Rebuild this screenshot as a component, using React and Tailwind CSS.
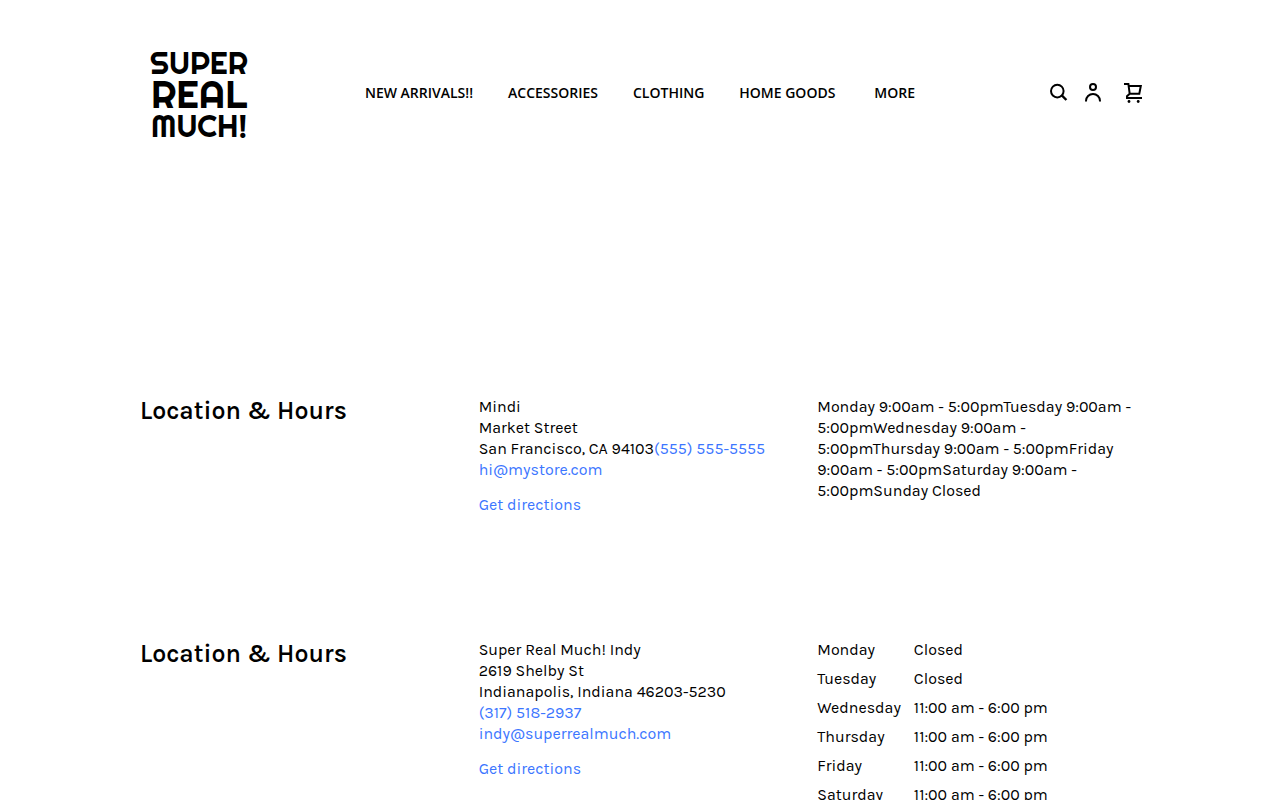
const navItems = ["New Arrivals!!", "Accessories", "Clothing", "Home Goods"];

const hours = [
  ["Monday", "Closed"],
  ["Tuesday", "Closed"],
  ["Wednesday", "11:00 am - 6:00 pm"],
  ["Thursday", "11:00 am - 6:00 pm"],
  ["Friday", "11:00 am - 6:00 pm"],
  ["Saturday", "11:00 am - 6:00 pm"],
  ["Sunday", "11:00 am - 6:00 pm"],
];

function Logo() {
  return (
    <a
      href="#home"
      className="flex w-[124px] flex-col items-center font-['Righteous','Inter',sans-serif] font-normal"
    >
      <span className="text-[31px] leading-[28px]">SUPER</span>
      <span className="text-[39px] leading-[35px]">REAL</span>
      <span className="text-[31px] leading-[28px]">MUCH!</span>
    </a>
  );
}

function HeaderIcons() {
  return (
    <div className="flex items-center justify-end pb-1">
      <button type="button" aria-label="Search" className="mr-[14px]">
        <svg className="block h-5 w-5" viewBox="0 0 20 20" fill="none" stroke="currentColor" strokeWidth="2">
          <circle cx="8.3" cy="8.1" r="6.3" />
          <path d="M12.8 12.4 17.4 17" strokeWidth="2.4" />
        </svg>
      </button>
      <a href="#account" aria-label="Account" className="mr-5">
        <svg className="block h-5 w-5" viewBox="0 0 20 20" fill="none" stroke="currentColor" strokeWidth="2">
          <circle cx="10" cy="4" r="3" />
          <path d="M3 18.6v-.6a7 7 0 0 1 14 0v.6" />
        </svg>
      </a>
      <a href="#cart" aria-label="Cart">
        <svg className="block h-5 w-5" viewBox="0 0 20 20" fill="none" stroke="currentColor" strokeWidth="2">
          <path d="M1 1h4.4l1.3 9.8h9.6L17.8 3H5.6M6.7 10.8 4 13.2V15h15" />
          <circle cx="6" cy="18.5" r="1.4" fill="currentColor" stroke="none" />
          <circle cx="15.2" cy="18.5" r="1.4" fill="currentColor" stroke="none" />
        </svg>
      </a>
    </div>
  );
}

function Location({ children, directions }) {
  return (
    <div>
      <address className="not-italic">{children}</address>
      <a href={directions} className="mt-[14px] inline-block text-[#3c76ff]">
        Get directions
      </a>
    </div>
  );
}

export default function App() {
  return (
    <div className="bg-white font-['Karla','Inter',sans-serif] text-base leading-[21px] text-black">
      <header className="mx-auto grid max-w-[1006px] grid-cols-[1fr_auto_1fr] items-center pt-[49px]">
        <Logo />
        <nav aria-label="Main" className="pb-1 font-['Open_Sans',sans-serif] text-sm font-semibold uppercase">
          <ul className="flex items-center gap-[35px]">
            {navItems.map((item) => (
              <li key={item}>
                <a href="#shop" className="whitespace-nowrap">{item}</a>
              </li>
            ))}
            <li>
              <button type="button" className="pl-1 uppercase">More</button>
            </li>
          </ul>
        </nav>
        <HeaderIcons />
      </header>

      <main className="mx-auto max-w-[1000px] pt-[256px]">
        <section className="grid grid-cols-3 gap-4">
          <h2 className="text-[25px] leading-[30px] font-semibold">Location &amp; Hours</h2>
          <Location directions="#sf">
            Mindi<br />
            Market Street<br />
            San Francisco, CA 94103
            <a href="tel:5555555555" className="text-[#3c76ff]">(555) 555-5555</a><br />
            <a href="mailto:hi@mystore.com" className="text-[#3c76ff]">hi@mystore.com</a>
          </Location>
          <p>
            Monday 9:00am - 5:00pmTuesday 9:00am - 5:00pmWednesday 9:00am -
            5:00pmThursday 9:00am - 5:00pmFriday 9:00am - 5:00pmSaturday 9:00am
            - 5:00pmSunday Closed
          </p>
        </section>

        <section className="mt-[124px] grid grid-cols-3 gap-4 pb-24">
          <h2 className="text-[25px] leading-[30px] font-semibold">Location &amp; Hours</h2>
          <Location directions="#indy">
            Super Real Much! Indy<br />
            2619 Shelby St<br />
            Indianapolis, Indiana 46203-5230<br />
            <a href="tel:3175182937" className="text-[#3c76ff]">(317) 518-2937</a><br />
            <a href="mailto:indy@superrealmuch.com" className="text-[#3c76ff]">indy@superrealmuch.com</a>
          </Location>
          <table aria-label="Opening hours" className="self-start justify-self-start text-left">
            <tbody>
              {hours.map(([day, time]) => (
                <tr key={day}>
                  <th scope="row" className="pr-[13px] pb-2 font-normal">{day}</th>
                  <td className="pb-2">{time}</td>
                </tr>
              ))}
            </tbody>
          </table>
        </section>
      </main>
    </div>
  );
}
